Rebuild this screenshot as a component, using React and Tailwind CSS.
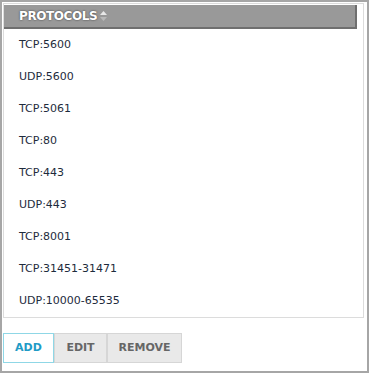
import React from "react";

const rows = [
  "TCP:5600",
  "UDP:5600",
  "TCP:5061",
  "TCP:80",
  "TCP:443",
  "UDP:443",
  "TCP:8001",
  "TCP:31451-31471",
  "UDP:10000-65535",
];

export default function App() {
  return (
    <div
      className="w-[369px] h-[373px] border-2 border-[#a6a6a6] bg-white pl-px pt-px"
      style={{ fontFamily: '"DejaVu Sans", Tahoma, sans-serif' }}
    >
      <div className="w-[361px] h-[315px] border border-[#dcdcdc] flex flex-col">
        <div className="w-[353px] h-[24px] bg-[#999999] border-b-2 border-r-2 border-[#6f6f6f] flex items-center pl-[15px] mt-px">
          <span
            className="text-white font-bold text-[12px] tracking-[-0.4px]"
            style={{ textShadow: "0 0 2px #333" }}
          >
            PROTOCOLS
          </span>
          <svg width="9" height="12" viewBox="0 0 9 12" className="ml-[2px]">
            <path d="M4.5 1 L8 5 L1 5 Z" fill="#e8e8e8" />
            <path d="M4.5 11 L8 7 L1 7 Z" fill="#b8b8b8" />
          </svg>
        </div>
        {rows.map((r) => (
          <div
            key={r}
            className="h-[32px] flex items-center pl-[15px] text-[11px] text-[#1e2b3c]"
          >
            {r}
          </div>
        ))}
      </div>
      <div className="flex mt-[15px] text-[11px] font-bold">
        <div className="w-[51px] h-[30px] border border-[#8fd7e6] bg-white text-[#1f9bc6] flex items-center justify-center">
          ADD
        </div>
        <div className="w-[53px] h-[30px] border border-[#d6d6d6] bg-[#e9e9e9] text-[#666666] flex items-center justify-center">
          EDIT
        </div>
        <div className="w-[75px] h-[30px] border border-[#d6d6d6] bg-[#e9e9e9] text-[#666666] flex items-center justify-center">
          REMOVE
        </div>
      </div>
    </div>
  );
}
